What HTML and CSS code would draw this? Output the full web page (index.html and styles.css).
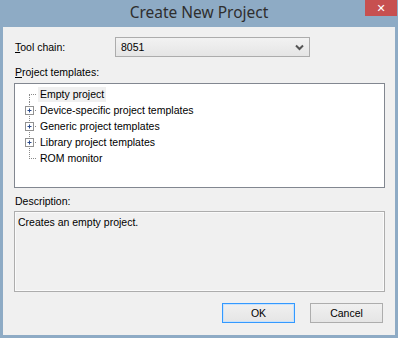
FILE: index.html
```html
<!DOCTYPE html>
<html lang="en">
<head>
  <meta charset="UTF-8" />
  <title>Create New Project</title>
  <link rel="stylesheet" href="styles.css">
</head>
<body>
  <div class="window">
    <div class="titlebar">
      <span class="title">Create New Project</span>
      <span class="close">✕</span>
    </div>

    <div class="client">
      <div class="field-row">
        <label class="label toolchain-label"><u>T</u>ool chain:</label>
        <div class="select">
          <span>8051</span>
          <svg class="chevron" width="9" height="7" viewBox="0 0 9 7">
            <path d="M1 1.5 L4.5 5 L8 1.5" fill="none" stroke="#555" stroke-width="2"/>
          </svg>
        </div>
      </div>

      <div class="label section-label"><u>P</u>roject templates:</div>
      <div class="tree">
        <div class="tree-row">
          <svg class="branch" width="18" height="16" viewBox="0 0 18 16">
            <path d="M9 8.5 H17" stroke="#8a8a8a" stroke-dasharray="1 1"/>
            <path d="M9.5 9 V16" stroke="#8a8a8a" stroke-dasharray="1 1"/>
          </svg>
          <span class="tree-text selected">Empty project</span>
        </div>
        <div class="tree-row">
          <svg class="branch" width="18" height="16" viewBox="0 0 18 16">
            <path d="M9.5 0 V16" stroke="#8a8a8a" stroke-dasharray="1 1"/>
            <path d="M13 8.5 H17" stroke="#8a8a8a" stroke-dasharray="1 1"/>
            <rect x="5.5" y="4.5" width="8" height="8" fill="#fff" stroke="#919191"/>
            <path d="M7.5 8.5 H11.5 M9.5 6.5 V10.5" stroke="#2b4a8a"/>
          </svg>
          <span class="tree-text">Device-specific project templates</span>
        </div>
        <div class="tree-row">
          <svg class="branch" width="18" height="16" viewBox="0 0 18 16">
            <path d="M9.5 0 V16" stroke="#8a8a8a" stroke-dasharray="1 1"/>
            <path d="M13 8.5 H17" stroke="#8a8a8a" stroke-dasharray="1 1"/>
            <rect x="5.5" y="4.5" width="8" height="8" fill="#fff" stroke="#919191"/>
            <path d="M7.5 8.5 H11.5 M9.5 6.5 V10.5" stroke="#2b4a8a"/>
          </svg>
          <span class="tree-text">Generic project templates</span>
        </div>
        <div class="tree-row">
          <svg class="branch" width="18" height="16" viewBox="0 0 18 16">
            <path d="M9.5 0 V16" stroke="#8a8a8a" stroke-dasharray="1 1"/>
            <path d="M13 8.5 H17" stroke="#8a8a8a" stroke-dasharray="1 1"/>
            <rect x="5.5" y="4.5" width="8" height="8" fill="#fff" stroke="#919191"/>
            <path d="M7.5 8.5 H11.5 M9.5 6.5 V10.5" stroke="#2b4a8a"/>
          </svg>
          <span class="tree-text">Library project templates</span>
        </div>
        <div class="tree-row">
          <svg class="branch" width="18" height="16" viewBox="0 0 18 16">
            <path d="M9.5 0 V8" stroke="#8a8a8a" stroke-dasharray="1 1"/>
            <path d="M9 8.5 H17" stroke="#8a8a8a" stroke-dasharray="1 1"/>
          </svg>
          <span class="tree-text">ROM monitor</span>
        </div>
      </div>

      <div class="label section-label desc-label">Description:</div>
      <div class="description">Creates an empty project.</div>

      <div class="buttons">
        <button class="btn btn-default">OK</button>
        <button class="btn">Cancel</button>
      </div>
    </div>
  </div>
</body>
</html>
```

FILE: styles.css
```css
body {
  margin: 0;
  background-color: #8eabc5;
  font-family: 'Liberation Sans', Arial, sans-serif;
  font-size: 10.5px;
  color: #000;
}

.window {
  width: 398px;
  height: 338px;
  position: relative;
}

.titlebar {
  height: 27px;
  display: flex;
  align-items: center;
  justify-content: center;
}

.title {
  font-family: 'Noto Sans', 'Open Sans', sans-serif;
  font-size: 15.5px;
  color: #2e2e2e;
  margin-top: -4px;
}

.close {
  position: absolute;
  top: 0;
  right: 1px;
  width: 32px;
  height: 16px;
  background-color: #c75050;
  color: #fff;
  font-family: 'DejaVu Sans', sans-serif;
  font-size: 11px;
  font-weight: bold;
  display: flex;
  align-items: center;
  justify-content: center;
}

.client {
  margin: 0 3px 3px 3px;
  height: 308px;
  box-sizing: border-box;
  background-color: #f0f0f0;
  padding: 10px 10px 12px 11px;
}

.field-row {
  display: flex;
  align-items: center;
  height: 20px;
}

.label {
  line-height: 13px;
}

.toolchain-label {
  width: 101px;
  padding-left: 1px;
  box-sizing: border-box;
}

.select {
  width: 195px;
  height: 20px;
  box-sizing: border-box;
  border: 1px solid #acacac;
  background: linear-gradient(#f2f2f2, #e5e5e5);
  display: flex;
  align-items: center;
  justify-content: space-between;
  padding: 0 5px 0 5px;
}

.chevron {
  margin-top: 1px;
}

.section-label {
  margin-top: 9px;
  padding-left: 1px;
}

.tree {
  margin-top: 4px;
  height: 105px;
  box-sizing: border-box;
  border: 1px solid #828790;
  background-color: #fff;
  padding: 2px 0 0 5px;
}

.tree-row {
  display: flex;
  align-items: center;
  height: 16px;
}

.branch {
  display: block;
}

.tree-text {
  padding: 1px 2px;
  line-height: 13px;
}

.selected {
  background-color: #f0f0f0;
}

.desc-label {
  margin-top: 7px;
}

.description {
  margin-top: 3px;
  height: 81px;
  box-sizing: border-box;
  border: 1px solid #adadad;
  box-shadow: inset 0 0 0 1px #fafafa;
  padding: 4px 3px;
  line-height: 13px;
}

.buttons {
  margin-top: 11px;
  display: flex;
  justify-content: flex-end;
  gap: 15px;
  padding-right: 2px;
}

.btn {
  width: 73px;
  height: 20px;
  margin: 0;
  padding: 0;
  border: 1px solid #adadad;
  background: linear-gradient(#f0f0f0, #e5e5e5);
  font-family: 'Liberation Sans', Arial, sans-serif;
  font-size: 10.5px;
  color: #000;
}

.btn-default {
  border-color: #3399ff;
  box-shadow: inset 0 0 0 1px #c9e2fb;
}
```
